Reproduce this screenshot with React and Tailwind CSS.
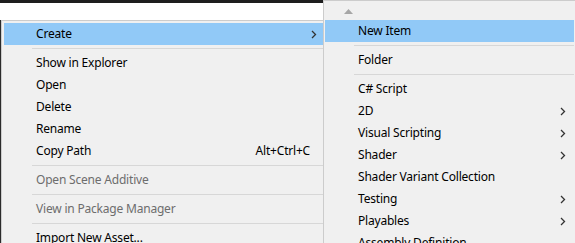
import React from "react";

function Chevron() {
  return (
    <svg width="6" height="9" viewBox="0 0 6 9" className="shrink-0">
      <polyline points="1,1 4.5,4.5 1,8" fill="none" stroke="#333333" strokeWidth="1.3" />
    </svg>
  );
}

function Row({ label, highlight, arrow, shortcut, disabled, padL, arrowPr }) {
  return (
    <div
      className={
        "h-[22px] shrink-0 flex items-center text-[12px] tracking-[-0.2px] " +
        (highlight ? "bg-[#91c9f7] " : "") +
        (disabled ? "text-[#6d6d6d]" : "text-black")
      }
    >
      <span className={padL + " flex-1 whitespace-nowrap"}>{label}</span>
      {shortcut && <span className="pr-[13px] whitespace-nowrap">{shortcut}</span>}
      {arrow && (
        <span className={arrowPr + " flex items-center"}>
          <Chevron />
        </span>
      )}
    </div>
  );
}

function Sep({ ml }) {
  return (
    <div className="h-[7px] shrink-0 pt-[3px]">
      <div className={ml + " h-px bg-[#d7d7d7]"} />
    </div>
  );
}

export default function App() {
  const font = { fontFamily: '"Noto Sans", "Noto Sans CJK KR", sans-serif' };
  const L = { padL: "pl-[32px]", arrowPr: "pr-[6px]" };
  const R = { padL: "pl-[33px]", arrowPr: "pr-[8px]" };
  return (
    <div className="w-[575px] h-[243px] overflow-hidden flex items-start bg-white" style={font}>
      <div className="w-[323px] h-[243px] flex flex-col shrink-0 overflow-hidden">
        <div className="h-[3px] shrink-0 bg-[#1e1e1e]" />
        <div className="h-[17px] shrink-0 bg-white" />
        <div className="flex-1 flex min-h-0">
          <div className="w-px shrink-0 bg-[#2b2b2b]" />
          <div className="flex-1 flex flex-col border-l border-t border-[#cccccc] bg-[#f0f0f0] pl-[2px] pt-[2px]">
            <Row label="Create" highlight arrow {...L} />
            <Sep ml="ml-[28px]" />
            <Row label="Show in Explorer" {...L} />
            <Row label="Open" {...L} />
            <Row label="Delete" {...L} />
            <Row label="Rename" {...L} />
            <Row label="Copy Path" shortcut="Alt+Ctrl+C" {...L} />
            <Sep ml="ml-[28px]" />
            <Row label="Open Scene Additive" disabled {...L} />
            <Sep ml="ml-[28px]" />
            <Row label="View in Package Manager" disabled {...L} />
            <Sep ml="ml-[28px]" />
            <Row label="Import New Asset..." {...L} />
          </div>
        </div>
      </div>
      <div className="w-[252px] h-[243px] shrink-0 flex flex-col overflow-hidden border-l border-t border-[#cccccc] bg-[#f0f0f0] px-[1px]">
        <div className="h-[19px] shrink-0 relative">
          <svg width="9" height="5" viewBox="0 0 9 5" className="absolute left-[19px] top-[8px]">
            <polygon points="0,5 4.5,0 9,5" fill="#a6a6a6" />
          </svg>
        </div>
        <Row label="New Item" highlight {...R} />
        <Sep ml="ml-[29px]" />
        <Row label="Folder" {...R} />
        <Sep ml="ml-[29px]" />
        <Row label="C# Script" {...R} />
        <Row label="2D" arrow {...R} />
        <Row label="Visual Scripting" arrow {...R} />
        <Row label="Shader" arrow {...R} />
        <Row label="Shader Variant Collection" {...R} />
        <Row label="Testing" arrow {...R} />
        <Row label="Playables" arrow {...R} />
        <Row label="Assembly Definition" {...R} />
      </div>
    </div>
  );
}
